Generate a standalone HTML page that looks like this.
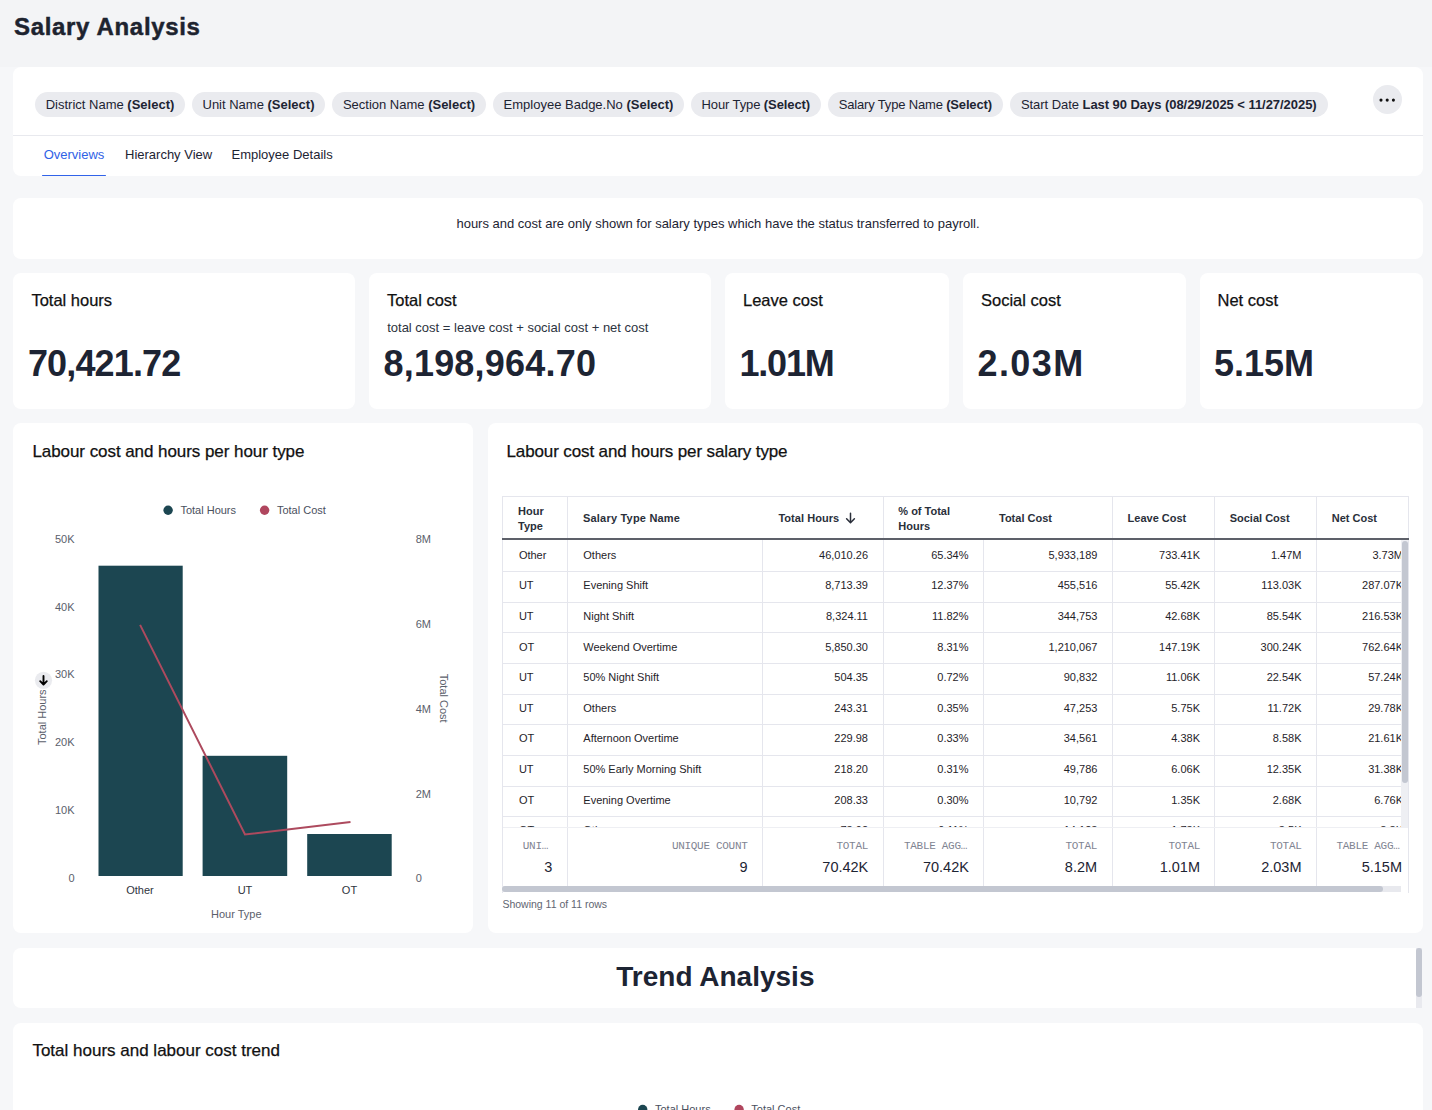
<!DOCTYPE html>
<html><head><meta charset="utf-8"><style>
*{box-sizing:border-box;margin:0;padding:0}
html,body{width:1432px;height:1110px;overflow:hidden}
body{background:#f6f7f9;font-family:"Liberation Sans",sans-serif;color:#1d2433;position:relative}
.a{position:absolute;white-space:nowrap;line-height:1}
.card{position:absolute;background:#fff;border-radius:8px}
.chip{height:25px;border-radius:13px;background:#eaebef;font-size:13px;line-height:25px;padding:0 11px;white-space:nowrap;color:#1d2433;margin-right:7px}
.chips{position:absolute;left:35px;top:92px;display:flex}
.tb{position:absolute;line-height:1;white-space:nowrap;font-size:11px;color:#1d2433}
.th{position:absolute;line-height:14px;font-size:11px;font-weight:bold;color:#2a2f3a}
.vl{position:absolute;width:1px;background:#e6e7ee}
.hl{position:absolute;height:1px;background:#e6e7ee}
.mono{font-family:"Liberation Mono",monospace}
</style></head>
<body>
<div style="position:absolute;left:0;top:0;width:1432px;height:67px;background:#f3f4f6"></div>
<div class="a" style="left:14.0px;top:14.9px;font-size:24px;font-weight:bold;color:#1d232f;letter-spacing:0.67px;-webkit-text-stroke:0.45px #1d232f">Salary Analysis</div>
<div class="card" style="left:13.4px;top:67px;width:1409.6px;height:109px"></div>
<div class="chip" style="position:absolute;left:35px;top:92px;width:150.0px;padding:0;text-align:center;letter-spacing:0px">District Name <b>(Select)</b></div>
<div class="chip" style="position:absolute;left:192px;top:92px;width:133.0px;padding:0;text-align:center;letter-spacing:0px">Unit Name <b>(Select)</b></div>
<div class="chip" style="position:absolute;left:332px;top:92px;width:154.0px;padding:0;text-align:center;letter-spacing:0px">Section Name <b>(Select)</b></div>
<div class="chip" style="position:absolute;left:493px;top:92px;width:191.0px;padding:0;text-align:center;letter-spacing:0px">Employee Badge.No <b>(Select)</b></div>
<div class="chip" style="position:absolute;left:691px;top:92px;width:129.5px;padding:0;text-align:center;letter-spacing:-0.1px">Hour Type <b>(Select)</b></div>
<div class="chip" style="position:absolute;left:828px;top:92px;width:174.6px;padding:0;text-align:center;letter-spacing:-0.17px">Salary Type Name <b>(Select)</b></div>
<div class="chip" style="position:absolute;left:1010px;top:92px;width:317.5px;padding:0;text-align:center;letter-spacing:-0.05px">Start Date <b>Last 90 Days (08/29/2025 &lt; 11/27/2025)</b></div>
<div style="position:absolute;left:1373px;top:85px;width:29px;height:29px;border-radius:50%;background:#eaebef"></div>
<svg style="position:absolute;left:1370px;top:90px" width="34" height="20"><circle cx="11" cy="10.1" r="1.55" fill="#111"/><circle cx="17.2" cy="10.1" r="1.55" fill="#111"/><circle cx="23.4" cy="10.1" r="1.55" fill="#111"/></svg>
<div style="position:absolute;left:13.4px;top:135px;width:1409.6px;height:1px;background:#e8e9ee"></div>
<div class="a" style="left:43.7px;top:147.7px;font-size:13px;color:#2f62e6">Overviews</div>
<div class="a" style="left:125.0px;top:147.7px;font-size:13px;">Hierarchy View</div>
<div class="a" style="left:231.5px;top:147.7px;font-size:13px;">Employee Details</div>
<div style="position:absolute;left:42px;top:174.6px;width:64px;height:1.5px;border-radius:1px;background:#3163e9"></div>
<div class="card" style="left:13.4px;top:198px;width:1409.6px;height:61px"></div>
<div class="a" style="left:218.0px;width:1000px;text-align:center;top:216.5px;font-size:13px;">hours and cost are only shown for salary types which have the status transferred to payroll.</div>
<div class="card" style="left:13.4px;top:273px;width:342.1px;height:136px"></div>
<div class="a" style="left:31.4px;top:291.8px;font-size:16.5px;color:#111;-webkit-text-stroke:0.25px #111">Total hours</div>
<div class="a" style="left:27.9px;top:346.3px;font-size:36px;font-weight:bold;color:#1d2433;letter-spacing:-0.85px">70,421.72</div>
<div class="card" style="left:369px;top:273px;width:342px;height:136px"></div>
<div class="a" style="left:387.0px;top:291.8px;font-size:16.5px;color:#111;-webkit-text-stroke:0.25px #111">Total cost</div>
<div class="a" style="left:383.5px;top:346.3px;font-size:36px;font-weight:bold;color:#1d2433;letter-spacing:0.2px">8,198,964.70</div>
<div class="card" style="left:725px;top:273px;width:223.5px;height:136px"></div>
<div class="a" style="left:743.0px;top:291.8px;font-size:16.5px;color:#111;-webkit-text-stroke:0.25px #111">Leave cost</div>
<div class="a" style="left:739.5px;top:346.3px;font-size:36px;font-weight:bold;color:#1d2433;letter-spacing:-1.2px">1.01M</div>
<div class="card" style="left:963px;top:273px;width:223px;height:136px"></div>
<div class="a" style="left:981.0px;top:291.8px;font-size:16.5px;color:#111;-webkit-text-stroke:0.25px #111">Social cost</div>
<div class="a" style="left:977.5px;top:346.3px;font-size:36px;font-weight:bold;color:#1d2433;letter-spacing:1.4px">2.03M</div>
<div class="card" style="left:1199.5px;top:273px;width:223px;height:136px"></div>
<div class="a" style="left:1217.5px;top:291.8px;font-size:16.5px;color:#111;-webkit-text-stroke:0.25px #111">Net cost</div>
<div class="a" style="left:1214.0px;top:346.3px;font-size:36px;font-weight:bold;color:#1d2433;letter-spacing:0px">5.15M</div>
<div class="a" style="left:387.2px;top:320.9px;font-size:13px;color:#2c3340">total cost = leave cost + social cost + net cost</div>
<div class="card" style="left:13.4px;top:423px;width:459.6px;height:510px"></div>
<div class="a" style="left:32.4px;top:442.6px;font-size:17px;color:#111;letter-spacing:-0.06px;-webkit-text-stroke:0.25px #111">Labour cost and hours per hour type</div>
<div class="card" style="left:488px;top:423px;width:935px;height:510px"></div>
<div class="a" style="left:506.5px;top:442.6px;font-size:17px;color:#111;letter-spacing:-0.12px;-webkit-text-stroke:0.25px #111">Labour cost and hours per salary type</div>
<div class="card" style="left:13.4px;top:948px;width:1408.9px;height:60px;border-radius:8px 0 0 8px"></div>
<div class="a" style="left:215.4px;width:1000px;text-align:center;top:963.1px;font-size:28px;font-weight:bold;color:#1d2433">Trend Analysis</div>
<div style="position:absolute;left:1416px;top:948px;width:6.3px;height:60px;background:#e9eaef"></div>
<div style="position:absolute;left:1416px;top:948px;width:6.3px;height:49px;border-radius:3px;background:#c3c7d1"></div>
<div class="card" style="left:13.4px;top:1023px;width:1409.6px;height:120px"></div>
<div class="a" style="left:32.4px;top:1041.6px;font-size:17px;color:#111;-webkit-text-stroke:0.25px #111">Total hours and labour cost trend</div>
<svg style="position:absolute;left:0;top:0" width="1432" height="1110">
<circle cx="168.1" cy="510.2" r="4.7" fill="#1c4651"/>
<text x="180.4" y="513.8" font-family="Liberation Sans, sans-serif" font-size="11" fill="#4a505e">Total Hours</text>
<circle cx="264.6" cy="510.2" r="4.7" fill="#b0465e"/>
<text x="276.9" y="513.8" font-family="Liberation Sans, sans-serif" font-size="11" fill="#4a505e">Total Cost</text>
<text x="74.5" y="543.4" font-family="Liberation Sans, sans-serif" font-size="11" fill="#5b606b" text-anchor="end">50K</text>
<text x="74.5" y="611.1" font-family="Liberation Sans, sans-serif" font-size="11" fill="#5b606b" text-anchor="end">40K</text>
<text x="74.5" y="678.2" font-family="Liberation Sans, sans-serif" font-size="11" fill="#5b606b" text-anchor="end">30K</text>
<text x="74.5" y="746.2" font-family="Liberation Sans, sans-serif" font-size="11" fill="#5b606b" text-anchor="end">20K</text>
<text x="74.5" y="814.0" font-family="Liberation Sans, sans-serif" font-size="11" fill="#5b606b" text-anchor="end">10K</text>
<text x="74.5" y="882.0" font-family="Liberation Sans, sans-serif" font-size="11" fill="#5b606b" text-anchor="end">0</text>
<text x="415.7" y="543.4" font-family="Liberation Sans, sans-serif" font-size="11" fill="#5b606b">8M</text>
<text x="415.7" y="628.1" font-family="Liberation Sans, sans-serif" font-size="11" fill="#5b606b">6M</text>
<text x="415.7" y="712.8" font-family="Liberation Sans, sans-serif" font-size="11" fill="#5b606b">4M</text>
<text x="415.7" y="797.5" font-family="Liberation Sans, sans-serif" font-size="11" fill="#5b606b">2M</text>
<text x="415.7" y="882.1" font-family="Liberation Sans, sans-serif" font-size="11" fill="#5b606b">0</text>
<rect x="98.5" y="565.7" width="84.2" height="310.3" fill="#1c4651"/>
<rect x="202.6" y="755.8" width="84.6" height="120.2" fill="#1c4651"/>
<rect x="307.2" y="834" width="84.5" height="42.0" fill="#1c4651"/>
<polyline points="140.1,624.9 245,834.5 350.5,821.9" fill="none" stroke="#ad4a5e" stroke-width="2" stroke-linejoin="miter"/>
<text x="140" y="894.3" font-family="Liberation Sans, sans-serif" font-size="11" fill="#2f3440" text-anchor="middle">Other</text>
<text x="245" y="894.3" font-family="Liberation Sans, sans-serif" font-size="11" fill="#2f3440" text-anchor="middle">UT</text>
<text x="349.5" y="894.3" font-family="Liberation Sans, sans-serif" font-size="11" fill="#2f3440" text-anchor="middle">OT</text>
<text x="236.3" y="918.1" font-family="Liberation Sans, sans-serif" font-size="11" fill="#5b606b" text-anchor="middle">Hour Type</text>
<text transform="translate(46.3,717.2) rotate(-90)" x="0" y="0" font-family="Liberation Sans, sans-serif" font-size="11" fill="#5b606b" text-anchor="middle">Total Hours</text>
<text transform="translate(439.7,698.2) rotate(90)" x="0" y="0" font-family="Liberation Sans, sans-serif" font-size="11" fill="#5b606b" text-anchor="middle">Total Cost</text>
<circle cx="43.5" cy="680.3" r="8.6" fill="#eaebef"/>
<path d="M43.5,676 V684.3 M40.2,681.2 L43.5,684.6 L46.8,681.2" fill="none" stroke="#000" stroke-width="1.9" stroke-linecap="round" stroke-linejoin="round"/>
<circle cx="642.7" cy="1109.5" r="4.7" fill="#1c4651"/>
<text x="655" y="1112.6" font-family="Liberation Sans, sans-serif" font-size="11" fill="#4a505e">Total Hours</text>
<circle cx="739.1" cy="1109.5" r="4.7" fill="#b0465e"/>
<text x="751.3" y="1112.6" font-family="Liberation Sans, sans-serif" font-size="11" fill="#4a505e">Total Cost</text>
</svg>
<div style="position:absolute;left:502px;top:496px;width:1px;height:397px;background:#e5e6ed"></div>
<div style="position:absolute;left:502px;top:496px;width:907px;height:1px;background:#e5e6ed"></div>
<div style="position:absolute;left:1408px;top:496px;width:1px;height:397px;background:#e5e6ed"></div>
<div style="position:absolute;left:567px;top:497px;width:1px;height:42px;background:#e5e6ed"></div>
<div style="position:absolute;left:883px;top:497px;width:1px;height:42px;background:#e5e6ed"></div>
<div style="position:absolute;left:1112px;top:497px;width:1px;height:42px;background:#e5e6ed"></div>
<div style="position:absolute;left:1214px;top:497px;width:1px;height:42px;background:#e5e6ed"></div>
<div style="position:absolute;left:1316px;top:497px;width:1px;height:42px;background:#e5e6ed"></div>
<div class="a" style="left:518.0px;top:505.8px;font-size:11px;font-weight:bold;color:#2a2f3a">Hour</div>
<div class="a" style="left:518.0px;top:521.0px;font-size:11px;font-weight:bold;color:#2a2f3a">Type</div>
<div class="a" style="left:583.0px;top:512.7px;font-size:11px;font-weight:bold;color:#2a2f3a;letter-spacing:0.2px">Salary Type Name</div>
<div class="a" style="left:778.4px;top:512.7px;font-size:11px;font-weight:bold;color:#2a2f3a;letter-spacing:0.05px">Total Hours</div>
<svg style="position:absolute;left:844px;top:511px" width="14" height="14"><path d="M6.5,2.2 V11.6 M2.6,7.8 L6.5,11.8 L10.4,7.8" fill="none" stroke="#2a2f3a" stroke-width="1.5" stroke-linecap="round" stroke-linejoin="round"/></svg>
<div class="a" style="left:898.3px;top:505.8px;font-size:11px;font-weight:bold;color:#2a2f3a">% of Total</div>
<div class="a" style="left:898.3px;top:521.0px;font-size:11px;font-weight:bold;color:#2a2f3a">Hours</div>
<div class="a" style="left:999.0px;top:512.7px;font-size:11px;font-weight:bold;color:#2a2f3a">Total Cost</div>
<div class="a" style="left:1127.6px;top:512.7px;font-size:11px;font-weight:bold;color:#2a2f3a">Leave Cost</div>
<div class="a" style="left:1229.7px;top:512.7px;font-size:11px;font-weight:bold;color:#2a2f3a">Social Cost</div>
<div class="a" style="left:1331.8px;top:512.7px;font-size:11px;font-weight:bold;color:#2a2f3a">Net Cost</div>
<div style="position:absolute;left:502px;top:538px;width:907px;height:2px;background:#5d6069"></div>
<div style="position:absolute;left:503px;top:540px;width:905px;height:287px;overflow:hidden">
<div class="a" style="left:15.9px;top:9.8px;font-size:11px;color:#1f2329">Other</div>
<div class="a" style="left:80.3px;top:9.8px;font-size:11px;color:#1f2329">Others</div>
<div class="a" style="left:65.0px;width:300px;text-align:right;top:9.8px;font-size:11px;color:#1f2329">46,010.26</div>
<div class="a" style="left:165.5px;width:300px;text-align:right;top:9.8px;font-size:11px;color:#1f2329">65.34%</div>
<div class="a" style="left:294.4px;width:300px;text-align:right;top:9.8px;font-size:11px;color:#1f2329">5,933,189</div>
<div class="a" style="left:397.0px;width:300px;text-align:right;top:9.8px;font-size:11px;color:#1f2329">733.41K</div>
<div class="a" style="left:498.5px;width:300px;text-align:right;top:9.8px;font-size:11px;color:#1f2329">1.47M</div>
<div class="a" style="left:600.0px;width:300px;text-align:right;top:9.8px;font-size:11px;color:#1f2329">3.73M</div>
<div style="position:absolute;left:0;top:31px;width:905px;height:1px;background:#e5e6ed"></div>
<div class="a" style="left:15.9px;top:40.4px;font-size:11px;color:#1f2329">UT</div>
<div class="a" style="left:80.3px;top:40.4px;font-size:11px;color:#1f2329">Evening Shift</div>
<div class="a" style="left:65.0px;width:300px;text-align:right;top:40.4px;font-size:11px;color:#1f2329">8,713.39</div>
<div class="a" style="left:165.5px;width:300px;text-align:right;top:40.4px;font-size:11px;color:#1f2329">12.37%</div>
<div class="a" style="left:294.4px;width:300px;text-align:right;top:40.4px;font-size:11px;color:#1f2329">455,516</div>
<div class="a" style="left:397.0px;width:300px;text-align:right;top:40.4px;font-size:11px;color:#1f2329">55.42K</div>
<div class="a" style="left:498.5px;width:300px;text-align:right;top:40.4px;font-size:11px;color:#1f2329">113.03K</div>
<div class="a" style="left:600.0px;width:300px;text-align:right;top:40.4px;font-size:11px;color:#1f2329">287.07K</div>
<div style="position:absolute;left:0;top:62px;width:905px;height:1px;background:#e5e6ed"></div>
<div class="a" style="left:15.9px;top:71.0px;font-size:11px;color:#1f2329">UT</div>
<div class="a" style="left:80.3px;top:71.0px;font-size:11px;color:#1f2329">Night Shift</div>
<div class="a" style="left:65.0px;width:300px;text-align:right;top:71.0px;font-size:11px;color:#1f2329">8,324.11</div>
<div class="a" style="left:165.5px;width:300px;text-align:right;top:71.0px;font-size:11px;color:#1f2329">11.82%</div>
<div class="a" style="left:294.4px;width:300px;text-align:right;top:71.0px;font-size:11px;color:#1f2329">344,753</div>
<div class="a" style="left:397.0px;width:300px;text-align:right;top:71.0px;font-size:11px;color:#1f2329">42.68K</div>
<div class="a" style="left:498.5px;width:300px;text-align:right;top:71.0px;font-size:11px;color:#1f2329">85.54K</div>
<div class="a" style="left:600.0px;width:300px;text-align:right;top:71.0px;font-size:11px;color:#1f2329">216.53K</div>
<div style="position:absolute;left:0;top:92px;width:905px;height:1px;background:#e5e6ed"></div>
<div class="a" style="left:15.9px;top:101.6px;font-size:11px;color:#1f2329">OT</div>
<div class="a" style="left:80.3px;top:101.6px;font-size:11px;color:#1f2329">Weekend Overtime</div>
<div class="a" style="left:65.0px;width:300px;text-align:right;top:101.6px;font-size:11px;color:#1f2329">5,850.30</div>
<div class="a" style="left:165.5px;width:300px;text-align:right;top:101.6px;font-size:11px;color:#1f2329">8.31%</div>
<div class="a" style="left:294.4px;width:300px;text-align:right;top:101.6px;font-size:11px;color:#1f2329">1,210,067</div>
<div class="a" style="left:397.0px;width:300px;text-align:right;top:101.6px;font-size:11px;color:#1f2329">147.19K</div>
<div class="a" style="left:498.5px;width:300px;text-align:right;top:101.6px;font-size:11px;color:#1f2329">300.24K</div>
<div class="a" style="left:600.0px;width:300px;text-align:right;top:101.6px;font-size:11px;color:#1f2329">762.64K</div>
<div style="position:absolute;left:0;top:123px;width:905px;height:1px;background:#e5e6ed"></div>
<div class="a" style="left:15.9px;top:132.2px;font-size:11px;color:#1f2329">UT</div>
<div class="a" style="left:80.3px;top:132.2px;font-size:11px;color:#1f2329">50% Night Shift</div>
<div class="a" style="left:65.0px;width:300px;text-align:right;top:132.2px;font-size:11px;color:#1f2329">504.35</div>
<div class="a" style="left:165.5px;width:300px;text-align:right;top:132.2px;font-size:11px;color:#1f2329">0.72%</div>
<div class="a" style="left:294.4px;width:300px;text-align:right;top:132.2px;font-size:11px;color:#1f2329">90,832</div>
<div class="a" style="left:397.0px;width:300px;text-align:right;top:132.2px;font-size:11px;color:#1f2329">11.06K</div>
<div class="a" style="left:498.5px;width:300px;text-align:right;top:132.2px;font-size:11px;color:#1f2329">22.54K</div>
<div class="a" style="left:600.0px;width:300px;text-align:right;top:132.2px;font-size:11px;color:#1f2329">57.24K</div>
<div style="position:absolute;left:0;top:154px;width:905px;height:1px;background:#e5e6ed"></div>
<div class="a" style="left:15.9px;top:162.8px;font-size:11px;color:#1f2329">UT</div>
<div class="a" style="left:80.3px;top:162.8px;font-size:11px;color:#1f2329">Others</div>
<div class="a" style="left:65.0px;width:300px;text-align:right;top:162.8px;font-size:11px;color:#1f2329">243.31</div>
<div class="a" style="left:165.5px;width:300px;text-align:right;top:162.8px;font-size:11px;color:#1f2329">0.35%</div>
<div class="a" style="left:294.4px;width:300px;text-align:right;top:162.8px;font-size:11px;color:#1f2329">47,253</div>
<div class="a" style="left:397.0px;width:300px;text-align:right;top:162.8px;font-size:11px;color:#1f2329">5.75K</div>
<div class="a" style="left:498.5px;width:300px;text-align:right;top:162.8px;font-size:11px;color:#1f2329">11.72K</div>
<div class="a" style="left:600.0px;width:300px;text-align:right;top:162.8px;font-size:11px;color:#1f2329">29.78K</div>
<div style="position:absolute;left:0;top:184px;width:905px;height:1px;background:#e5e6ed"></div>
<div class="a" style="left:15.9px;top:193.4px;font-size:11px;color:#1f2329">OT</div>
<div class="a" style="left:80.3px;top:193.4px;font-size:11px;color:#1f2329">Afternoon Overtime</div>
<div class="a" style="left:65.0px;width:300px;text-align:right;top:193.4px;font-size:11px;color:#1f2329">229.98</div>
<div class="a" style="left:165.5px;width:300px;text-align:right;top:193.4px;font-size:11px;color:#1f2329">0.33%</div>
<div class="a" style="left:294.4px;width:300px;text-align:right;top:193.4px;font-size:11px;color:#1f2329">34,561</div>
<div class="a" style="left:397.0px;width:300px;text-align:right;top:193.4px;font-size:11px;color:#1f2329">4.38K</div>
<div class="a" style="left:498.5px;width:300px;text-align:right;top:193.4px;font-size:11px;color:#1f2329">8.58K</div>
<div class="a" style="left:600.0px;width:300px;text-align:right;top:193.4px;font-size:11px;color:#1f2329">21.61K</div>
<div style="position:absolute;left:0;top:215px;width:905px;height:1px;background:#e5e6ed"></div>
<div class="a" style="left:15.9px;top:224.0px;font-size:11px;color:#1f2329">UT</div>
<div class="a" style="left:80.3px;top:224.0px;font-size:11px;color:#1f2329">50% Early Morning Shift</div>
<div class="a" style="left:65.0px;width:300px;text-align:right;top:224.0px;font-size:11px;color:#1f2329">218.20</div>
<div class="a" style="left:165.5px;width:300px;text-align:right;top:224.0px;font-size:11px;color:#1f2329">0.31%</div>
<div class="a" style="left:294.4px;width:300px;text-align:right;top:224.0px;font-size:11px;color:#1f2329">49,786</div>
<div class="a" style="left:397.0px;width:300px;text-align:right;top:224.0px;font-size:11px;color:#1f2329">6.06K</div>
<div class="a" style="left:498.5px;width:300px;text-align:right;top:224.0px;font-size:11px;color:#1f2329">12.35K</div>
<div class="a" style="left:600.0px;width:300px;text-align:right;top:224.0px;font-size:11px;color:#1f2329">31.38K</div>
<div style="position:absolute;left:0;top:246px;width:905px;height:1px;background:#e5e6ed"></div>
<div class="a" style="left:15.9px;top:254.6px;font-size:11px;color:#1f2329">OT</div>
<div class="a" style="left:80.3px;top:254.6px;font-size:11px;color:#1f2329">Evening Overtime</div>
<div class="a" style="left:65.0px;width:300px;text-align:right;top:254.6px;font-size:11px;color:#1f2329">208.33</div>
<div class="a" style="left:165.5px;width:300px;text-align:right;top:254.6px;font-size:11px;color:#1f2329">0.30%</div>
<div class="a" style="left:294.4px;width:300px;text-align:right;top:254.6px;font-size:11px;color:#1f2329">10,792</div>
<div class="a" style="left:397.0px;width:300px;text-align:right;top:254.6px;font-size:11px;color:#1f2329">1.35K</div>
<div class="a" style="left:498.5px;width:300px;text-align:right;top:254.6px;font-size:11px;color:#1f2329">2.68K</div>
<div class="a" style="left:600.0px;width:300px;text-align:right;top:254.6px;font-size:11px;color:#1f2329">6.76K</div>
<div style="position:absolute;left:0;top:276px;width:905px;height:1px;background:#e5e6ed"></div>
<div class="a" style="left:15.9px;top:285.2px;font-size:11px;color:#1f2329">OT</div>
<div class="a" style="left:80.3px;top:285.2px;font-size:11px;color:#1f2329">Others</div>
<div class="a" style="left:65.0px;width:300px;text-align:right;top:285.2px;font-size:11px;color:#1f2329">73.92</div>
<div class="a" style="left:165.5px;width:300px;text-align:right;top:285.2px;font-size:11px;color:#1f2329">0.11%</div>
<div class="a" style="left:294.4px;width:300px;text-align:right;top:285.2px;font-size:11px;color:#1f2329">14,123</div>
<div class="a" style="left:397.0px;width:300px;text-align:right;top:285.2px;font-size:11px;color:#1f2329">1.73K</div>
<div class="a" style="left:498.5px;width:300px;text-align:right;top:285.2px;font-size:11px;color:#1f2329">3.5K</div>
<div class="a" style="left:600.0px;width:300px;text-align:right;top:285.2px;font-size:11px;color:#1f2329">8.8K</div>
<div style="position:absolute;left:0;top:307px;width:905px;height:1px;background:#e5e6ed"></div>
<div style="position:absolute;left:64px;top:0;width:1px;height:287px;background:#e5e6ed"></div>
<div style="position:absolute;left:259px;top:0;width:1px;height:287px;background:#e5e6ed"></div>
<div style="position:absolute;left:380px;top:0;width:1px;height:287px;background:#e5e6ed"></div>
<div style="position:absolute;left:480px;top:0;width:1px;height:287px;background:#e5e6ed"></div>
<div style="position:absolute;left:609px;top:0;width:1px;height:287px;background:#e5e6ed"></div>
<div style="position:absolute;left:711px;top:0;width:1px;height:287px;background:#e5e6ed"></div>
<div style="position:absolute;left:813px;top:0;width:1px;height:287px;background:#e5e6ed"></div>
</div>
<div style="position:absolute;left:503px;top:827px;width:905px;height:1px;background:#eeeff3"></div>
<div style="position:absolute;left:567px;top:828px;width:1px;height:58px;background:#e5e6ed"></div>
<div style="position:absolute;left:762px;top:828px;width:1px;height:58px;background:#e5e6ed"></div>
<div style="position:absolute;left:883px;top:828px;width:1px;height:58px;background:#e5e6ed"></div>
<div style="position:absolute;left:983px;top:828px;width:1px;height:58px;background:#e5e6ed"></div>
<div style="position:absolute;left:1112px;top:828px;width:1px;height:58px;background:#e5e6ed"></div>
<div style="position:absolute;left:1214px;top:828px;width:1px;height:58px;background:#e5e6ed"></div>
<div style="position:absolute;left:1316px;top:828px;width:1px;height:58px;background:#e5e6ed"></div>
<div class="a mono" style="left:248.0px;width:300px;text-align:right;top:841.0px;font-size:11px;color:#7f8492;letter-spacing:-0.3px">UNI…</div>
<div class="a mono" style="left:447.5px;width:300px;text-align:right;top:841.0px;font-size:11px;color:#7f8492;letter-spacing:-0.3px">UNIQUE COUNT</div>
<div class="a mono" style="left:568.0px;width:300px;text-align:right;top:841.0px;font-size:11px;color:#7f8492;letter-spacing:-0.3px">TOTAL</div>
<div class="a mono" style="left:667.0px;width:300px;text-align:right;top:841.0px;font-size:11px;color:#7f8492;letter-spacing:-0.3px">TABLE AGG…</div>
<div class="a mono" style="left:797.0px;width:300px;text-align:right;top:841.0px;font-size:11px;color:#7f8492;letter-spacing:-0.3px">TOTAL</div>
<div class="a mono" style="left:900.0px;width:300px;text-align:right;top:841.0px;font-size:11px;color:#7f8492;letter-spacing:-0.3px">TOTAL</div>
<div class="a mono" style="left:1001.5px;width:300px;text-align:right;top:841.0px;font-size:11px;color:#7f8492;letter-spacing:-0.3px">TOTAL</div>
<div class="a mono" style="left:1099.5px;width:300px;text-align:right;top:841.0px;font-size:11px;color:#7f8492;letter-spacing:-0.3px">TABLE AGG…</div>
<div class="a" style="left:252.3px;width:300px;text-align:right;top:859.7px;font-size:14.5px;color:#1d2433">3</div>
<div class="a" style="left:447.6px;width:300px;text-align:right;top:859.7px;font-size:14.5px;color:#1d2433">9</div>
<div class="a" style="left:568.3px;width:300px;text-align:right;top:859.7px;font-size:14.5px;color:#1d2433">70.42K</div>
<div class="a" style="left:668.9px;width:300px;text-align:right;top:859.7px;font-size:14.5px;color:#1d2433">70.42K</div>
<div class="a" style="left:797.1px;width:300px;text-align:right;top:859.7px;font-size:14.5px;color:#1d2433">8.2M</div>
<div class="a" style="left:900.0px;width:300px;text-align:right;top:859.7px;font-size:14.5px;color:#1d2433">1.01M</div>
<div class="a" style="left:1001.5px;width:300px;text-align:right;top:859.7px;font-size:14.5px;color:#1d2433">2.03M</div>
<div class="a" style="left:1102.0px;width:300px;text-align:right;top:859.7px;font-size:14.5px;color:#1d2433">5.15M</div>
<div style="position:absolute;left:1401px;top:540px;width:7px;height:287px;background:#eeeff3"></div>
<div style="position:absolute;left:1401.5px;top:541px;width:6.5px;height:242px;border-radius:3px;background:#c3c7d1"></div>
<div style="position:absolute;left:502px;top:886px;width:899px;height:6px;background:#e8e9ee"></div>
<div style="position:absolute;left:502px;top:886px;width:881px;height:6px;border-radius:3px;background:#c3c7d1"></div>
<div class="a" style="left:502.4px;top:898.9px;font-size:10.5px;color:#5f6571">Showing 11 of 11 rows</div>
</body></html>
